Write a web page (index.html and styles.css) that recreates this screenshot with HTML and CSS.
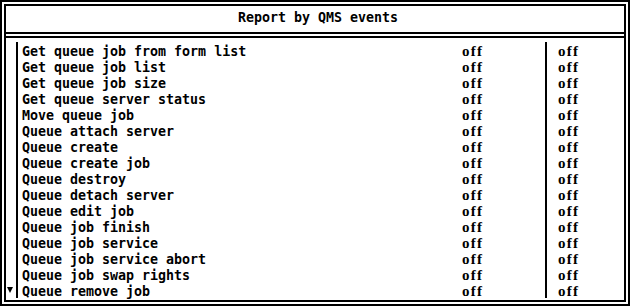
FILE: index.html
```html
<!DOCTYPE html>
<html>
<head>
<meta charset="utf-8">
<link rel="stylesheet" href="styles.css">
</head>
<body>
<div class="screen">
  <div class="header">Report by QMS events</div>
  <div class="body">
    <div class="gutter">
      <div class="arrow-cell"><svg class="arrow" width="6" height="6" viewBox="0 0 6 6"><polygon points="0,0 6,0 3,6" fill="#000"/></svg></div>
    </div>
    <div class="main">
      <div class="row"><span class="name">Get queue job from form list</span><span class="val">off</span></div>
      <div class="row"><span class="name">Get queue job list</span><span class="val">off</span></div>
      <div class="row"><span class="name">Get queue job size</span><span class="val">off</span></div>
      <div class="row"><span class="name">Get queue server status</span><span class="val">off</span></div>
      <div class="row"><span class="name">Move queue job</span><span class="val">off</span></div>
      <div class="row"><span class="name">Queue attach server</span><span class="val">off</span></div>
      <div class="row"><span class="name">Queue create</span><span class="val">off</span></div>
      <div class="row"><span class="name">Queue create job</span><span class="val">off</span></div>
      <div class="row"><span class="name">Queue destroy</span><span class="val">off</span></div>
      <div class="row"><span class="name">Queue detach server</span><span class="val">off</span></div>
      <div class="row"><span class="name">Queue edit job</span><span class="val">off</span></div>
      <div class="row"><span class="name">Queue job finish</span><span class="val">off</span></div>
      <div class="row"><span class="name">Queue job service</span><span class="val">off</span></div>
      <div class="row"><span class="name">Queue job service abort</span><span class="val">off</span></div>
      <div class="row"><span class="name">Queue job swap rights</span><span class="val">off</span></div>
      <div class="row"><span class="name">Queue remove job</span><span class="val">off</span></div>
    </div>
    <div class="second">
      <div class="row"><span class="val">off</span></div>
      <div class="row"><span class="val">off</span></div>
      <div class="row"><span class="val">off</span></div>
      <div class="row"><span class="val">off</span></div>
      <div class="row"><span class="val">off</span></div>
      <div class="row"><span class="val">off</span></div>
      <div class="row"><span class="val">off</span></div>
      <div class="row"><span class="val">off</span></div>
      <div class="row"><span class="val">off</span></div>
      <div class="row"><span class="val">off</span></div>
      <div class="row"><span class="val">off</span></div>
      <div class="row"><span class="val">off</span></div>
      <div class="row"><span class="val">off</span></div>
      <div class="row"><span class="val">off</span></div>
      <div class="row"><span class="val">off</span></div>
      <div class="row"><span class="val">off</span></div>
    </div>
  </div>
</div>
</body>
</html>
```

FILE: styles.css
```css
html, body {
  margin: 0;
  padding: 0;
  background: #fff;
}

.screen {
  width: 630px;
  height: 306px;
  box-sizing: border-box;
  border: 6px double #000;
  display: flex;
  flex-direction: column;
  font-family: "DejaVu Sans Mono", monospace;
  font-weight: bold;
  font-size: 13.3px;
  color: #000;
}

.header {
  height: 32px;
  box-sizing: border-box;
  border-bottom: 6px double #000;
  padding: 4px 0 0 6px;
  line-height: 16px;
  text-align: center;
  white-space: pre;
}

.body {
  display: flex;
  align-items: flex-start;
  padding-top: 4px;
}

.gutter {
  width: 10px;
  height: 256px;
  display: flex;
  flex-direction: column;
  justify-content: flex-end;
}

.arrow-cell {
  height: 16px;
  display: flex;
  align-items: flex-start;
  padding-left: 1px;
}

.arrow {
  display: block;
  margin-top: 5px;
}

.main {
  width: 529px;
  box-sizing: border-box;
  border-left: 2px solid #000;
  padding-left: 4px;
}

.second {
  border-left: 2px solid #000;
  padding-left: 11px;
}

.row {
  height: 16px;
  line-height: 18px;
  display: flex;
  align-items: baseline;
}

.name {
  width: 440px;
  white-space: pre;
}

.val {
  font-family: "Liberation Serif", serif;
  font-size: 15px;
  letter-spacing: 1.2px;
}
```
